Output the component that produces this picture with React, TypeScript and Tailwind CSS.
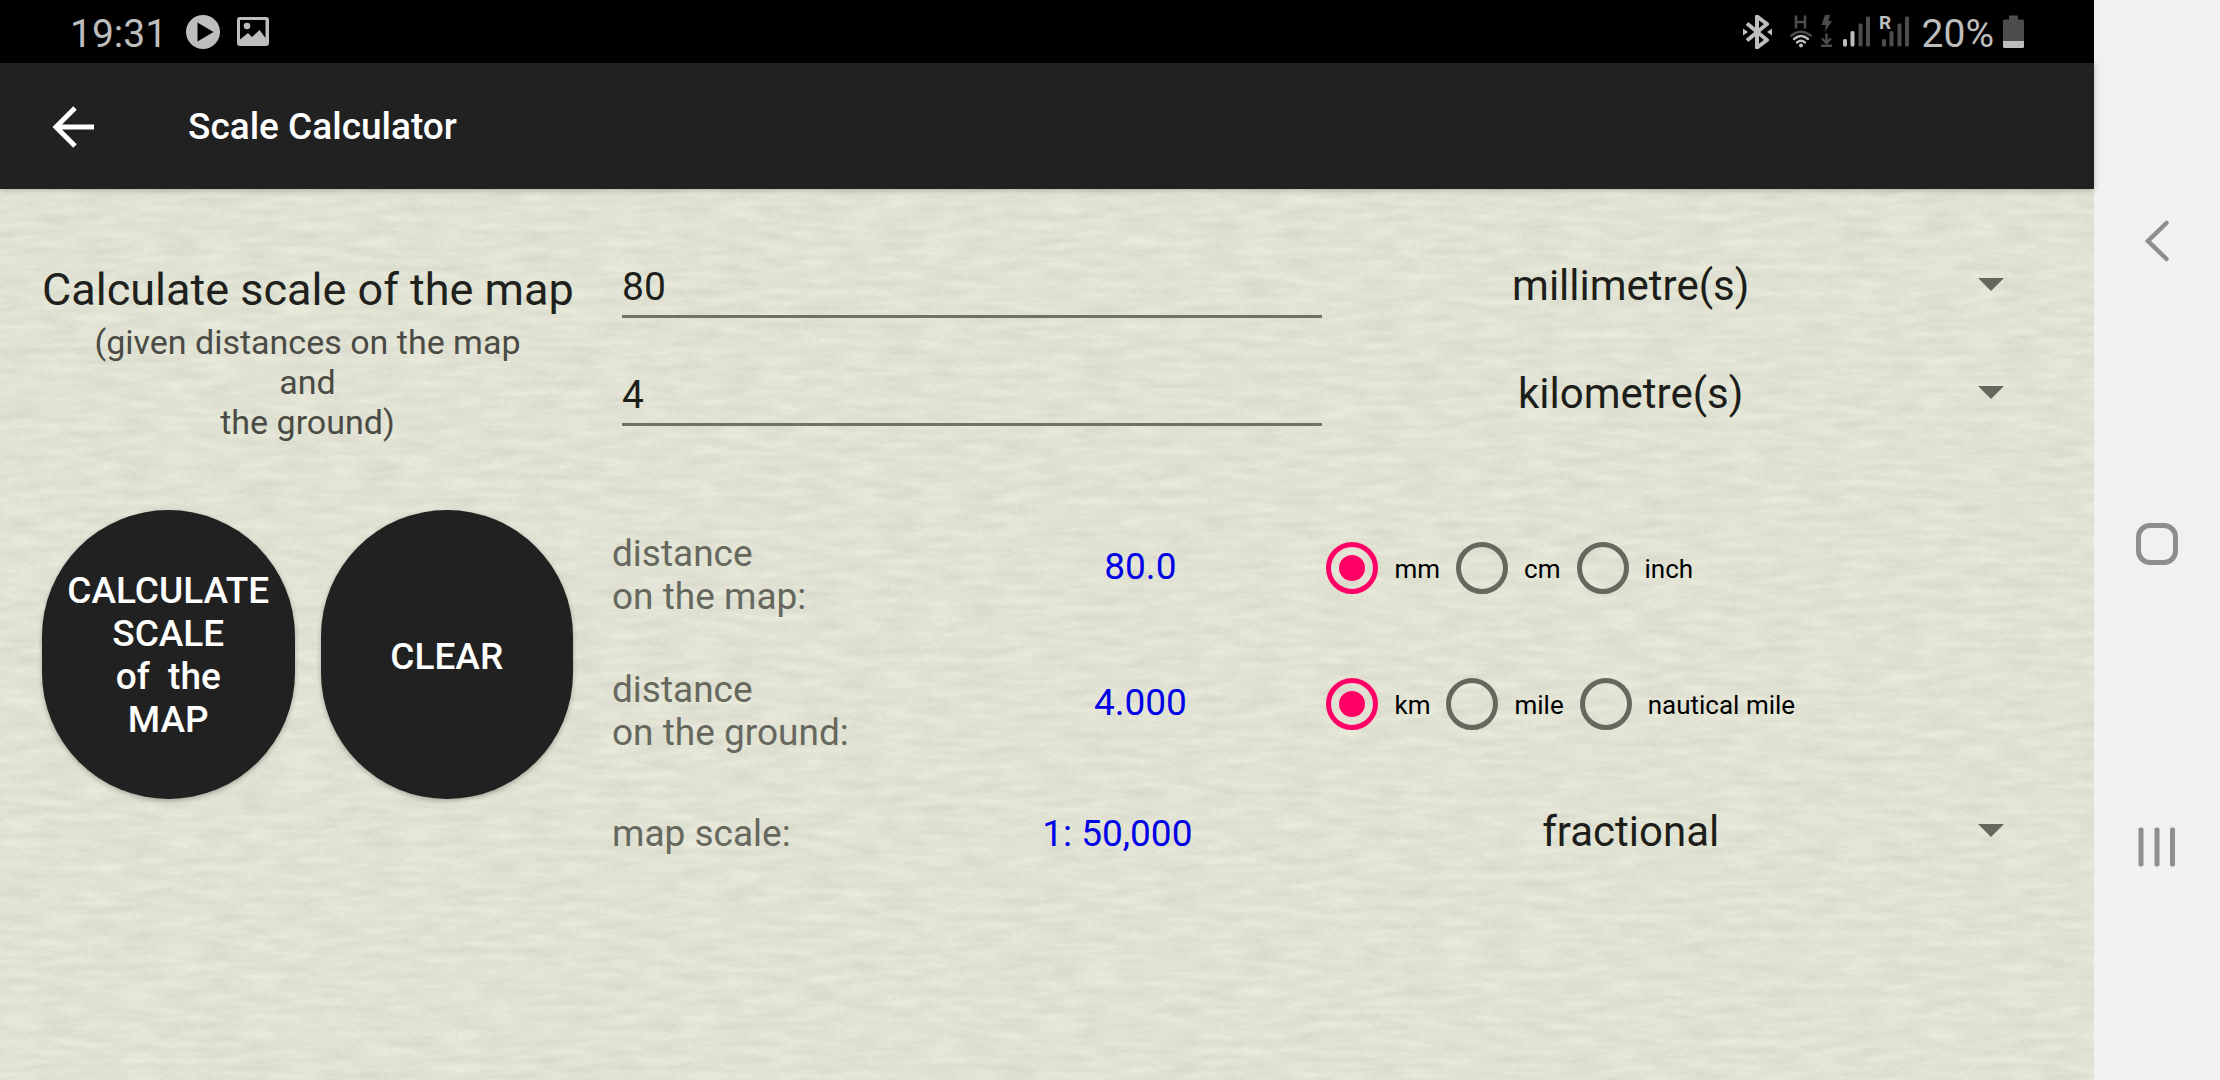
import React, { useState } from "react";

function StatusBar() {
  return (
    <div className="flex h-[63px] items-center justify-between bg-black pl-[70px] pr-[70px] text-[39px] leading-[44px] text-[#bdbdbd]">
      <div className="flex items-center">
        <time className="pt-1">19:31</time>
        <svg className="ml-[19px]" width="34" height="34" viewBox="0 0 34 34" aria-hidden="true">
          <circle cx="17" cy="17" r="17" fill="#bdbdbd" />
          <path d="M11.5 7.5v19L27.5 17z" fill="#000" />
        </svg>
        <svg className="ml-[17px]" width="32" height="30" viewBox="0 0 32 30" aria-hidden="true">
          <rect width="32" height="29" rx="3" fill="#bdbdbd" />
          <path d="M3 3h25.500v18L22.500 13l-7.500 7-4-4L3 22.500z" fill="#000" />
          <circle cx="10" cy="9" r="3.300" fill="#bdbdbd" />
        </svg>
      </div>
      <div className="flex items-center">
        <svg width="29" height="34" viewBox="0 0 29 34" aria-hidden="true">
          <path d="M4 8.500 24 25l-10 7.500V1.500L24 9 4 25.500" fill="none" stroke="#bdbdbd" strokeWidth="4" strokeLinejoin="round" />
          <path d="M0 13.500v7l5-3.500zM29 13.500v7L24 17z" fill="#bdbdbd" />
        </svg>
        <svg className="ml-[18px]" width="22" height="34" viewBox="0 0 22 34" fill="none" strokeLinecap="round" aria-hidden="true">
          <path d="M6 0.500v13M15 0.500v13M6 7h9" stroke="#4d4d4d" strokeWidth="2.500" strokeLinecap="butt" />
          <path d="M1.500 20.500Q11 13 20.500 20.500" stroke="#4d4d4d" strokeWidth="2.600" />
          <path d="M4 24q7-6 14 0M7 27.500q4-3.500 8 0" stroke="#bdbdbd" strokeWidth="2.400" />
          <circle cx="11" cy="30.500" r="2" fill="#bdbdbd" />
        </svg>
        <svg className="ml-[9px]" width="11" height="34" viewBox="0 0 11 34" aria-hidden="true">
          <path d="M4 0h5L7.500 6H11L3.500 17.500 5 10H0.500z" fill="#4d4d4d" />
          <path d="M5.500 18.500v9M1 23.500l4.500 4.500 4.500-4.500" fill="none" stroke="#4d4d4d" strokeWidth="2.400" />
          <path d="M0 29.500h11v2.500H0z" fill="#4d4d4d" />
        </svg>
        <svg className="ml-[11px]" width="27" height="34" viewBox="0 0 27 34" aria-hidden="true">
          <rect x="0" y="24" width="4" height="7.500" rx="1.500" fill="#bdbdbd" />
          <rect x="7.500" y="16" width="4" height="15.500" rx="1.500" fill="#bdbdbd" />
          <rect x="15.500" y="8.500" width="4" height="23" rx="1.500" fill="#4d4d4d" />
          <rect x="23" y="1.500" width="4" height="30" rx="1.500" fill="#4d4d4d" />
        </svg>
        <svg className="ml-[9px] overflow-visible" width="31" height="34" viewBox="0 0 31 34" aria-hidden="true">
          <text x="0" y="13.500" fontSize="19" fontWeight="700" fill="#bdbdbd" fontFamily="Roboto, sans-serif">R</text>
          <rect x="3" y="24" width="4" height="7.500" rx="1.500" fill="#4d4d4d" />
          <rect x="10.500" y="16" width="4" height="15.500" rx="1.500" fill="#4d4d4d" />
          <rect x="18.500" y="8.500" width="4" height="23" rx="1.500" fill="#4d4d4d" />
          <rect x="26" y="1.500" width="4" height="30" rx="1.500" fill="#4d4d4d" />
        </svg>
        <span className="ml-3 pt-1">20%</span>
        <svg className="ml-[9px]" width="21" height="34" viewBox="0 0 21 34" aria-hidden="true">
          <path d="M6 0.500h9v4h4.500q1.500 0 1.500 1.500v20H0V6q0-1.500 1.500-1.500H6z" fill="#4d4d4d" />
          <path d="M0 26h21v5.500q0 1.500-1.500 1.500h-18Q0 33 0 31.500z" fill="#bdbdbd" />
        </svg>
      </div>
    </div>
  );
}

function AppBar() {
  return (
    <header className="relative z-10 flex h-[126px] items-center bg-[#212121] pl-[52px] pt-0.5 text-white shadow-[0_1px_6px_rgba(0,0,0,0.25)]">
      <button type="button" aria-label="Back">
        <svg width="42" height="42" viewBox="0 0 42 42" fill="none" stroke="#fff" strokeWidth="5" aria-hidden="true">
          <path d="M42 21H4M23 2 4 21l19 19" />
        </svg>
      </button>
      <h1 className="pl-[94px] text-[37px] leading-[44px] font-medium">Scale Calculator</h1>
    </header>
  );
}

function PaperTexture() {
  return (
    <svg className="absolute inset-0 h-full w-full" aria-hidden="true">
      <filter id="paper" x="0" y="0" width="100%" height="100%" colorInterpolationFilters="sRGB">
        <feTurbulence type="fractalNoise" baseFrequency="0.025 0.12" numOctaves="2" seed="8" result="waves" />
        <feTurbulence type="fractalNoise" baseFrequency="0.25 0.3" numOctaves="2" seed="3" result="grain" />
        <feComposite in="waves" in2="grain" operator="arithmetic" k2="0.75" k3="0.25" />
        <feColorMatrix
          type="matrix"
          values="0.12 0 0 0 0.821  0.12 0 0 0 0.827  0.12 0 0 0 0.767  0 0 0 0 1"
        />
      </filter>
      <rect width="100%" height="100%" filter="url(#paper)" />
    </svg>
  );
}

function UnitSelect({ label, options }: { label: string; options: string[] }) {
  return (
    <div className="relative w-full">
      <select
        aria-label={label}
        className="h-[64px] w-full appearance-none bg-transparent pr-[118px] text-center text-[42px] leading-[50px] text-[#1d1e1a] outline-none [text-align-last:center]"
      >
        {options.map((o) => (
          <option key={o}>{o}</option>
        ))}
      </select>
      <svg className="pointer-events-none absolute top-6 right-[49px]" width="26" height="13" viewBox="0 0 26 13" aria-hidden="true">
        <path d="M0 0h26L13 13z" fill="#66675d" />
      </svg>
    </div>
  );
}

function DistanceInput({ label, initial }: { label: string; initial: string }) {
  const [value, setValue] = useState(initial);
  return (
    <input
      type="text"
      inputMode="decimal"
      aria-label={label}
      value={value}
      onChange={(e) => setValue(e.target.value)}
      className="mr-1 ml-[10px] h-[64px] min-w-0 border-b-[3px] border-[#717267] bg-transparent pt-1 text-[39px] leading-[46px] text-[#1d1e1a] outline-none"
    />
  );
}

function RadioRow({ name, units }: { name: string; units: string[] }) {
  return (
    <div role="radiogroup" aria-label={name} className="flex items-center gap-4">
      {units.map((u, i) => (
        <label key={u} className="flex items-center gap-4 text-[26px] leading-[30px] whitespace-nowrap text-black">
          <input
            type="radio"
            name={name}
            defaultChecked={i === 0}
            className="grid size-[52px] appearance-none place-items-center rounded-full border-[5px] border-[#66675d] checked:border-[#ff0066] checked:before:size-[26px] checked:before:rounded-full checked:before:bg-[#ff0066]"
          />
          <span className="pt-0.5">{u}</span>
        </label>
      ))}
    </div>
  );
}

function Calculator() {
  const round =
    "h-[289px] rounded-full bg-[#212121] text-[37px] leading-[43px] font-medium whitespace-pre text-white shadow-[0_2px_5px_rgba(0,0,0,0.25)]";
  return (
    <main className="relative flex-1">
      <PaperTexture />
      <div className="relative flex gap-[39px] pr-[41px] pl-[42px] pt-[43px]">
        <section className="w-[531px] shrink-0 pt-[30px]">
          <h2 className="text-center text-[45px] leading-[56px] whitespace-nowrap text-[#20211d]">Calculate scale of the map</h2>
          <p className="pt-1 text-center text-[34px] leading-[40px] text-[#4a4b45]">
            (given distances on the map
            <br />
            and
            <br />
            the ground)
          </p>
          <div className="mt-[68px] grid grid-cols-2 gap-[26px]">
            <button type="button" className={round}>{"CALCULATE\nSCALE\nof  the\nMAP"}</button>
            <button type="button" className={round + " pt-1"}>CLEAR</button>
          </div>
        </section>

        <section className="min-w-0 flex-1">
          <div className="grid auto-rows-[108px] grid-cols-[714fr_726fr] items-center">
            <DistanceInput label="Distance on the map" initial="80" />
            <UnitSelect label="Map distance unit" options={["millimetre(s)", "centimetre(s)", "inch(es)"]} />
            <DistanceInput label="Distance on the ground" initial="4" />
            <UnitSelect label="Ground distance unit" options={["kilometre(s)", "mile(s)", "nautical mile(s)"]} />
          </div>
          <div className="mt-[52px] grid grid-cols-[342fr_372fr_726fr] grid-rows-[136px_136px_120px] items-center text-[37px] leading-[43px] text-[#66675d]">
            <div className="pt-[14px]">
              distance
              <br />
              on the map:
            </div>
            <output className="pb-1 text-center text-[#0000e6]">80.0</output>
            <RadioRow name="Map unit" units={["mm", "cm", "inch"]} />
            <div className="pt-[14px]">
              distance
              <br />
              on the ground:
            </div>
            <output className="pb-1 text-center text-[#0000e6]">4.000</output>
            <RadioRow name="Ground unit" units={["km", "mile", "nautical mile"]} />
            <div className="pt-0.5">map scale:</div>
            <output className="pt-0.5 pr-[46px] text-center text-[#0000e6]">1: 50,000</output>
            <UnitSelect label="Scale format" options={["fractional", "verbal"]} />
          </div>
        </section>
      </div>
    </main>
  );
}

function NavBar() {
  return (
    <nav className="flex w-[126px] shrink-0 flex-col items-center justify-center gap-[261px] bg-[#f1f1f1] pt-2">
      <button type="button" aria-label="Back">
        <svg width="42" height="42" viewBox="0 0 42 42" fill="none" stroke="#8e8e8e" strokeWidth="4.500" strokeLinecap="round" aria-hidden="true">
          <path d="M30.500 3 12 21l18.500 18" />
        </svg>
      </button>
      <button type="button" aria-label="Home" className="size-[42px] rounded-[14px] border-[5px] border-[#8e8e8e]" />
      <button type="button" aria-label="Recent apps">
        <svg width="42" height="42" viewBox="0 0 42 42" fill="#8e8e8e" aria-hidden="true">
          <rect x="2.500" y="1.500" width="5" height="39" rx="2" />
          <rect x="18.500" y="1.500" width="5" height="39" rx="2" />
          <rect x="34" y="1.500" width="5" height="39" rx="2" />
        </svg>
      </button>
    </nav>
  );
}

export default function App() {
  return (
    <div className="flex min-h-screen bg-[#e1e3d2] font-[Roboto,sans-serif]">
      <div className="flex min-w-0 flex-1 flex-col">
        <StatusBar />
        <AppBar />
        <Calculator />
      </div>
      <NavBar />
    </div>
  );
}
